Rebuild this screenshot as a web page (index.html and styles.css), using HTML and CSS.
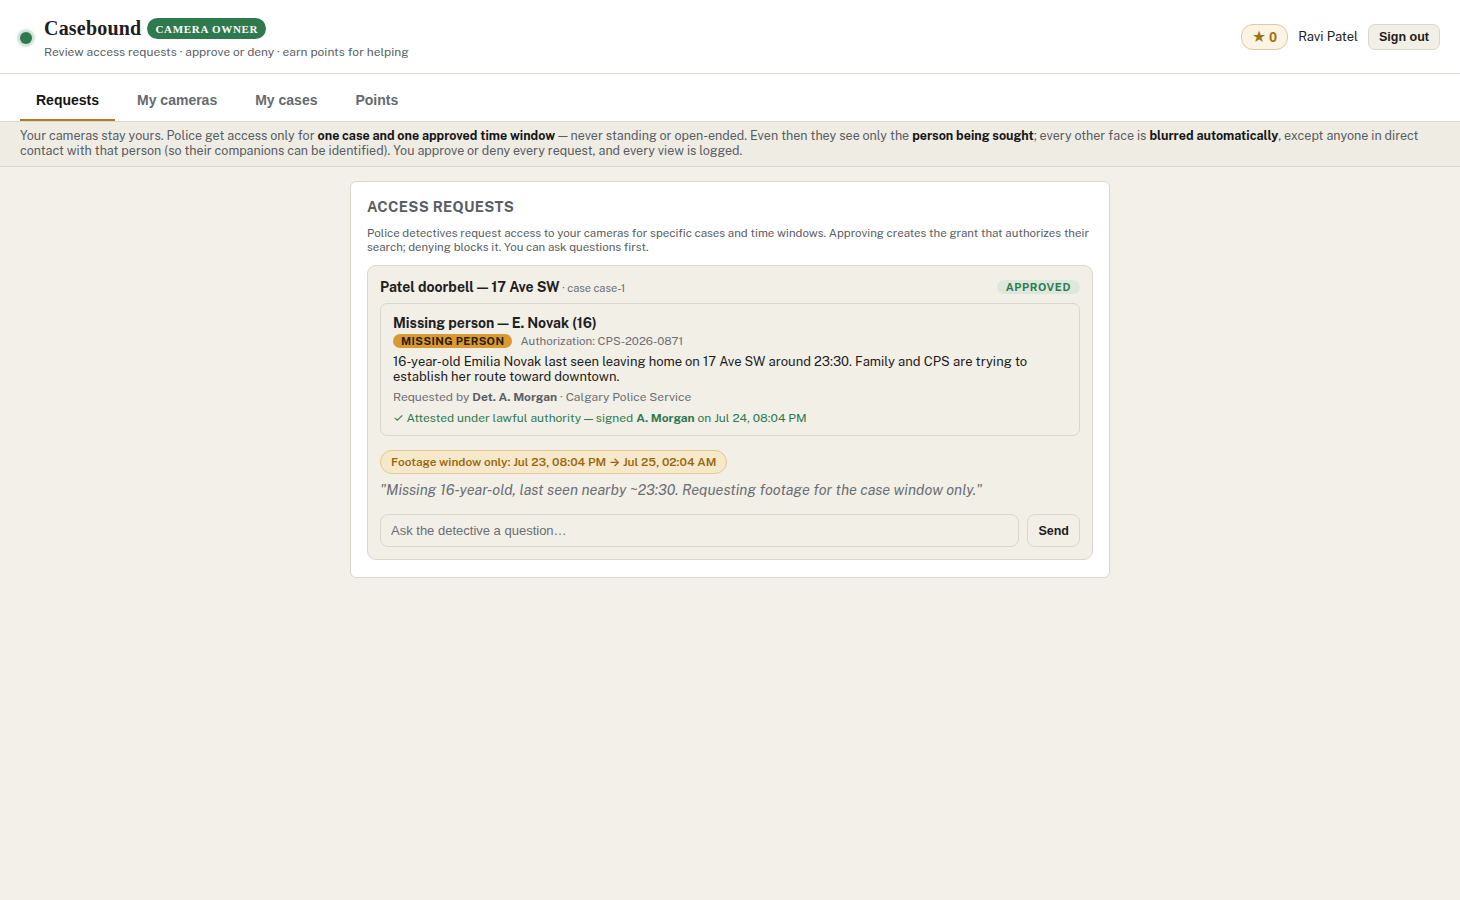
FILE: index.html
```html
<!DOCTYPE html>
<html lang="en">
<head>
    <meta charset="UTF-8">
    <title>Casebound - Camera owner</title>
    <link rel="stylesheet" href="styles.css">
</head>
<body>
    <header class="topbar">
        <div class="brand">
            <span class="brand-dot"></span>
            <div class="brand-text">
                <div class="brand-line">
                    <span class="brand-name">Casebound</span>
                    <span class="role-badge">Camera owner</span>
                </div>
                <div class="brand-sub">Review access requests · approve or deny · earn points for helping</div>
            </div>
        </div>
        <div class="user-area">
            <span class="points-pill"><span class="star">&#9733;</span> 0</span>
            <span class="user-name">Ravi Patel</span>
            <button class="btn-signout">Sign out</button>
        </div>
    </header>

    <nav class="tabs">
        <a class="tab tab-active">Requests</a>
        <a class="tab">My cameras</a>
        <a class="tab">My cases</a>
        <a class="tab">Points</a>
    </nav>

    <div class="notice">
        Your cameras stay yours. Police get access only for <b>one case and one approved time window</b> — never standing or open-ended. Even then they see only the <b>person being sought</b>; every other face is <b>blurred automatically</b>, except anyone in direct contact with that person (so their companions can be identified). You approve or deny every request, and every view is logged.
    </div>

    <main class="content">
        <section class="panel">
            <h2 class="panel-title">Access requests</h2>
            <p class="panel-desc">Police detectives request access to your cameras for specific cases and time windows. Approving creates the grant that authorizes their search; denying blocks it. You can ask questions first.</p>

            <div class="request">
                <div class="request-head">
                    <div><span class="request-title">Patel doorbell — 17 Ave SW</span><span class="request-case"> · case case-1</span></div>
                    <span class="status-pill">Approved</span>
                </div>

                <div class="case-box">
                    <div class="case-title">Missing person — E. Novak (16)</div>
                    <div class="case-meta">
                        <span class="type-badge">Missing person</span>
                        <span class="auth">Authorization: CPS-2026-0871</span>
                    </div>
                    <p class="case-desc">16-year-old Emilia Novak last seen leaving home on 17 Ave SW around 23:30. Family and CPS are trying to establish her route toward downtown.</p>
                    <div class="case-by">Requested by <b>Det. A. Morgan</b> · Calgary Police Service</div>
                    <div class="case-attest">✓ Attested under lawful authority — signed <b>A. Morgan</b> on Jul 24, 08:04 PM</div>
                </div>

                <div class="window-row">
                    <span class="window-pill">Footage window only: Jul 23, 08:04 PM → Jul 25, 02:04 AM</span>
                </div>
                <p class="request-quote">"Missing 16-year-old, last seen nearby ~23:30. Requesting footage for the case window only."</p>

                <div class="ask-row">
                    <input class="ask-input" type="text" placeholder="Ask the detective a question…">
                    <button class="btn-send">Send</button>
                </div>
            </div>
        </section>
    </main>
</body>
</html>
```

FILE: styles.css
```css
body {
    margin: 0;
    background: #f3f0ea;
    font-family: "Public Sans", "Inter", "Liberation Sans", sans-serif;
    color: #1f1f1f;
    min-height: 100vh;
}

/* header */
.topbar {
    background: #fff;
    height: 73px;
    border-bottom: 1px solid #dcd8cf;
    display: flex;
    align-items: center;
    justify-content: space-between;
    padding: 0 20px;
}

.brand {
    display: flex;
    align-items: center;
    gap: 12px;
}

.brand-dot {
    width: 12px;
    height: 12px;
    border-radius: 50%;
    background: #2e7a4e;
    box-shadow: 0 0 0 3px rgba(46,122,78,0.12), 0 0 6px rgba(46,122,78,0.35);
    margin-top: 2px;
}

.brand-text {
    padding-top: 2px;
}

.brand-line {
    display: flex;
    align-items: center;
    gap: 6px;
}

.brand-name {
    font-family: "Liberation Serif", "DejaVu Serif", serif;
    font-size: 20px;
    font-weight: 600;
    color: #1e1e1e;
    letter-spacing: 0.2px;
}

.role-badge {
    font-family: "Liberation Serif", "DejaVu Serif", serif;
    background: #2e7a4e;
    color: #fff;
    text-transform: uppercase;
    font-size: 11px;
    font-weight: 700;
    letter-spacing: 0.7px;
    padding: 5px 8px 4px;
    border-radius: 11px;
}

.brand-sub {
    font-size: 12px;
    color: #5b5f66;
    margin-top: 5px;
}

.user-area {
    display: flex;
    align-items: center;
    gap: 10px;
}

.points-pill {
    border: 1px solid #e3c99a;
    background: #fbf3e4;
    color: #a1700f;
    font-size: 12.5px;
    font-weight: 700;
    border-radius: 12px;
    padding: 3px 10px 4px;
}

.star {
    font-size: 14px;
}

.user-name {
    font-size: 13px;
    color: #222;
}

.btn-signout {
    font-family: "Liberation Sans", Arial, sans-serif;
    font-size: 12.5px;
    font-weight: 700;
    color: #1d1d1d;
    background: #f2efe7;
    border: 1px solid #dcd7cb;
    border-radius: 7px;
    padding: 5px 10px;
}

/* tabs */
.tabs {
    background: #fff;
    display: flex;
    gap: 6px;
    padding: 0 20px;
    border-bottom: 1px solid #dcd8cf;
}

.tab {
    font-family: "Liberation Sans", Arial, sans-serif;
    font-size: 14px;
    font-weight: 700;
    color: #666a70;
    padding: 18px 16px 11px;
    border-bottom: 2px solid transparent;
    cursor: pointer;
}

.tab-active {
    color: #151515;
    border-bottom-color: #b07a2a;
}

/* notice */
.notice {
    background: #efece4;
    border-bottom: 1px solid #dcd8cf;
    padding: 6px 20px 8px;
    font-size: 12.5px;
    line-height: 15px;
    color: #595d63;
}

.notice b {
    color: #161616;
}

/* main */
.content {
    display: flex;
    justify-content: center;
    padding-top: 14px;
}

.panel {
    width: 726px;
    background: #fff;
    border: 1px solid #dcd7cb;
    border-radius: 6px;
    padding: 16px 16px 17px;
}

.panel-title {
    margin: 0;
    text-transform: uppercase;
    font-size: 14.5px;
    font-weight: 700;
    letter-spacing: 0.3px;
    color: #5a5e64;
}

.panel-desc {
    margin: 11px 0 11px;
    font-size: 11.5px;
    line-height: 14px;
    color: #5a5e64;
}

.request {
    background: #f2efe7;
    border: 1px solid #dcd7cb;
    border-radius: 9px;
    padding: 11px 12px 12px;
}

.request-head {
    display: flex;
    justify-content: space-between;
    align-items: center;
}

.request-title {
    font-size: 14px;
    font-weight: 700;
}

.request-case {
    font-size: 11px;
    color: #6b6e73;
}

.status-pill {
    background: #dde8dc;
    color: #2e7a4e;
    font-size: 11px;
    font-weight: 700;
    letter-spacing: 0.6px;
    text-transform: uppercase;
    border-radius: 8px;
    padding: 1px 9px;
}

.case-box {
    margin-top: 7px;
    border: 1px solid #dcd7cb;
    border-radius: 7px;
    padding: 10px 12px 10px;
}

.case-title {
    font-size: 14px;
    line-height: 18px;
    font-weight: 700;
}

.case-meta {
    display: flex;
    align-items: center;
    gap: 8px;
    margin-top: 2px;
}

.type-badge {
    background: #d99a33;
    color: #2a1c06;
    text-transform: uppercase;
    font-size: 11px;
    line-height: 14px;
    font-weight: 700;
    letter-spacing: 0.4px;
    border-radius: 7px;
    padding: 0 8px;
}

.auth {
    font-size: 11.5px;
    color: #6b6e73;
}

.case-desc {
    margin: 6px 0 6px;
    font-size: 13px;
    line-height: 15px;
    color: #1c1c1c;
}

.case-by {
    font-size: 12px;
    color: #6b6e73;
}

.case-by b {
    color: #5a5e64;
}

.case-attest {
    margin-top: 6px;
    font-size: 12px;
    color: #2e7a4e;
}

.window-row {
    margin-top: 14px;
}

.window-pill {
    display: inline-block;
    background: #f6e8cb;
    border: 1px solid #e3c88f;
    color: #9a660c;
    font-size: 11.8px;
    font-weight: 600;
    border-radius: 12px;
    padding: 4px 10px;
}

.request-quote {
    margin: 7px 0 0;
    font-size: 14.5px;
    font-style: italic;
    color: #6b6e73;
}

.ask-row {
    display: flex;
    gap: 8px;
    margin-top: 16px;
}

.ask-input {
    flex: 1;
    height: 33px;
    box-sizing: border-box;
    font-family: "Liberation Sans", Arial, sans-serif;
    font-size: 13px;
    color: #333;
    background: #f2efe7;
    border: 1px solid #dcd7cb;
    border-radius: 8px;
    padding: 0 10px;
}

.ask-input::placeholder {
    color: #6b6e73;
}

.btn-send {
    font-family: "Liberation Sans", Arial, sans-serif;
    font-size: 12.5px;
    font-weight: 700;
    color: #1d1d1d;
    background: #f2efe7;
    border: 1px solid #dcd7cb;
    border-radius: 8px;
    padding: 0 10px;
}
```
